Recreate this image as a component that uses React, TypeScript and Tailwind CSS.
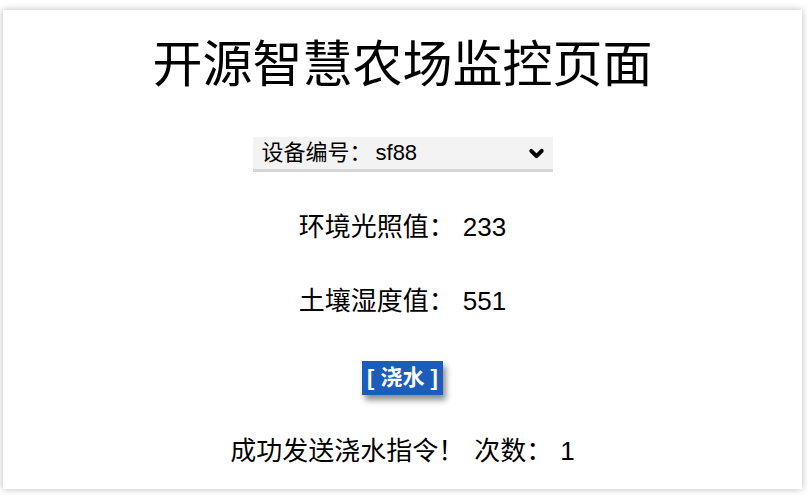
import { ChevronDown } from 'lucide-react';

const font = { fontFamily: '"Liberation Sans", "Noto Sans CJK SC", sans-serif' };

export default function App() {
  return (
    <div className="w-[810px] h-[500px] bg-white overflow-hidden" style={font}>
      <div className="ml-[3px] mt-[10px] w-[799px] h-[479px] bg-white shadow-[0_0_7px_rgba(0,0,0,0.28)] flex flex-col items-center pt-[22px] text-black">
        <h1 className="text-[50px] leading-[66px] font-normal">开源智慧农场监控页面</h1>

        <div className="mt-[39px] w-[300px] h-[35px] bg-[#f3f3f3] border-b-[3px] border-[#d5d5d5] flex items-center justify-between pl-[9px] pr-[6px]">
          <span className="text-[22px] leading-none">
            设备编号：<span className="ml-[4px]">sf88</span>
          </span>
          <ChevronDown size={21} strokeWidth={4.5} className="text-black" />
        </div>

        <p className="mt-[39px] text-[26px] leading-[32px]">
          环境光照值：<span className="ml-[8px]">233</span>
        </p>
        <p className="mt-[42px] text-[26px] leading-[32px]">
          土壤湿度值：<span className="ml-[8px]">551</span>
        </p>

        <button className="mt-[44px] h-[34px] px-[5px] bg-[#1b5db8] text-white font-bold text-[22px] leading-none shadow-[3px_5px_6px_rgba(0,0,0,0.45)]">
          [ 浇水 ]
        </button>

        <p className="mt-[40px] text-[26px] leading-[32px]">
          成功发送浇水指令！<span className="ml-[10px]">次数：</span>
          <span className="ml-[8px]">1</span>
        </p>
      </div>
    </div>
  );
}
